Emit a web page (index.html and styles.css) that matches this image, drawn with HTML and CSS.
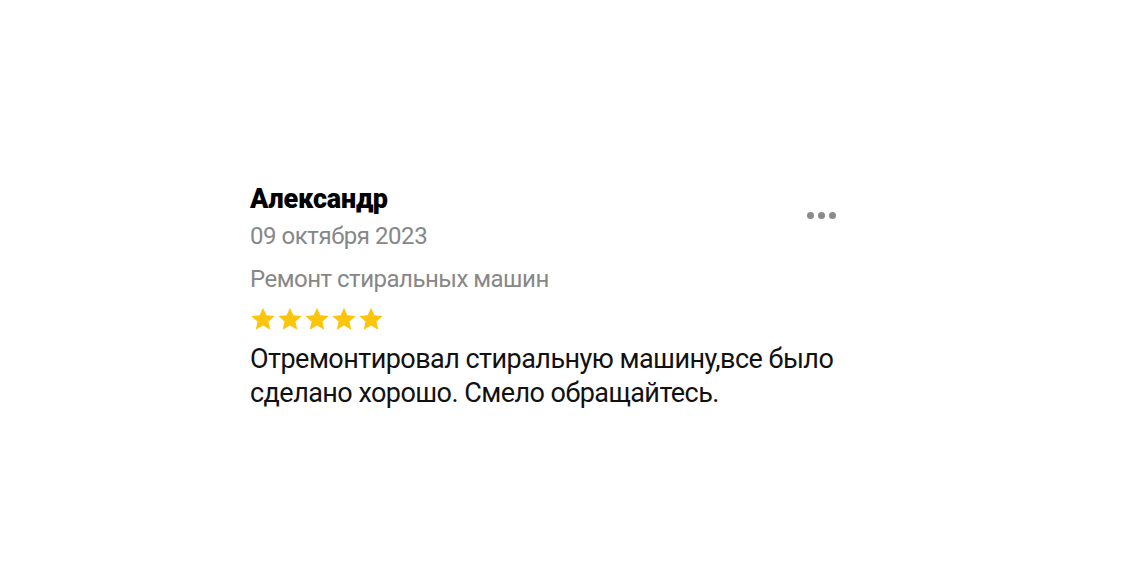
FILE: index.html
```html
<!DOCTYPE html>
<html lang="ru">
<head>
<meta charset="utf-8">
<link rel="stylesheet" href="styles.css">
</head>
<body>
<div class="review">
  <div class="head">
    <div class="who">
      <div class="name">Александр</div>
      <div class="date">09 октября 2023</div>
    </div>
    <div class="more"><span></span><span></span><span></span></div>
  </div>
  <div class="cat">Ремонт стиральных машин</div>
  <div class="stars">
    <svg viewBox="0 0 24 24"><path d="M12 1.5l3.1 7.1 7.7.7-5.8 5.1 1.7 7.6L12 18l-6.7 4 1.7-7.6-5.8-5.1 7.7-.7z"/></svg>
    <svg viewBox="0 0 24 24"><path d="M12 1.5l3.1 7.1 7.7.7-5.8 5.1 1.7 7.6L12 18l-6.7 4 1.7-7.6-5.8-5.1 7.7-.7z"/></svg>
    <svg viewBox="0 0 24 24"><path d="M12 1.5l3.1 7.1 7.7.7-5.8 5.1 1.7 7.6L12 18l-6.7 4 1.7-7.6-5.8-5.1 7.7-.7z"/></svg>
    <svg viewBox="0 0 24 24"><path d="M12 1.5l3.1 7.1 7.7.7-5.8 5.1 1.7 7.6L12 18l-6.7 4 1.7-7.6-5.8-5.1 7.7-.7z"/></svg>
    <svg viewBox="0 0 24 24"><path d="M12 1.5l3.1 7.1 7.7.7-5.8 5.1 1.7 7.6L12 18l-6.7 4 1.7-7.6-5.8-5.1 7.7-.7z"/></svg>
  </div>
  <p class="text">Отремонтировал стиральную машину,все было<br>сделано хорошо. Смело обращайтесь.</p>
</div>
</body>
</html>
```

FILE: styles.css
```css
html, body {
  margin: 0;
  padding: 0;
  background: #fff;
}
body {
  font-family: Roboto, "Noto Sans", sans-serif;
  color: #111;
}
.review {
  width: 586px;
  padding: 183px 0 0 250px;
}
.head {
  display: flex;
  justify-content: space-between;
  align-items: flex-start;
}
.name {
  font-size: 27px;
  font-weight: 900;
  line-height: 32px;
  letter-spacing: -0.2px;
  color: #000;
}
.date {
  font-size: 24px;
  line-height: 28px;
  letter-spacing: -0.45px;
  color: #878787;
  margin-top: 7px;
}
.more {
  display: flex;
  gap: 4px;
  margin-top: 29px;
}
.more span {
  width: 7px;
  height: 7px;
  border-radius: 50%;
  background: #8a8a8a;
}
.cat {
  font-size: 24px;
  line-height: 28px;
  letter-spacing: -0.5px;
  color: #878787;
  margin-top: 15px;
}
.stars {
  display: flex;
  gap: 1px;
  margin-top: 13px;
}
.stars svg {
  width: 26px;
  height: 26px;
  fill: #fcc40b;
}
.text {
  margin: 10px 0 0;
  font-size: 27px;
  line-height: 34px;
  letter-spacing: -0.54px;
  color: #111;
}
```
